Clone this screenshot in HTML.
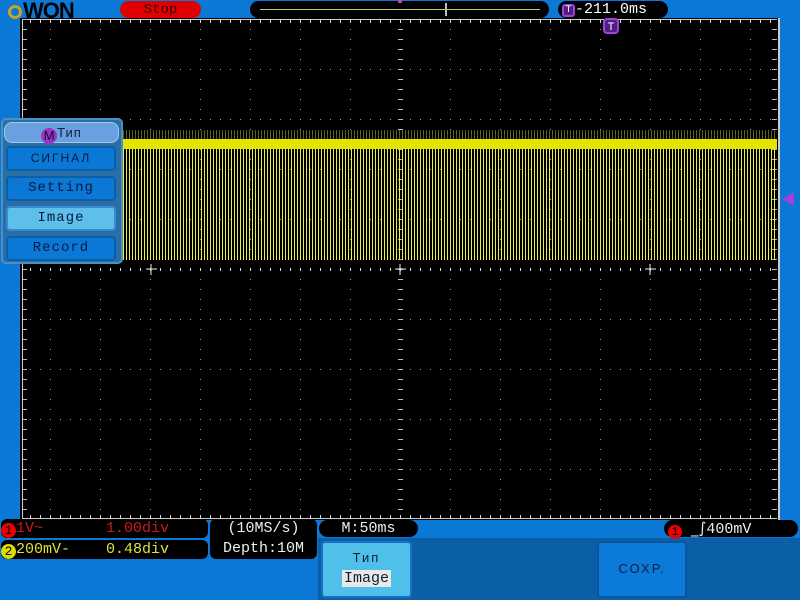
<!DOCTYPE html>
<html><head><meta charset="utf-8"><style>
*{margin:0;padding:0;box-sizing:border-box}
body{width:800px;height:600px;overflow:hidden;background:#0b78d6;position:relative;font-family:"Liberation Mono","DejaVu Sans Mono",monospace}
.a{position:absolute}
.pill{position:absolute;border-radius:9px;background:#000}
.btn{position:absolute;left:6px;width:110px;height:25px;background:#0b78d6;border:2px solid #0a5fa8;border-radius:4px;color:#061a40;font-size:14px;text-align:center;line-height:21px;letter-spacing:1px}
</style></head><body>
<div class="a" style="left:8px;top:-2px;font:bold 22px 'Liberation Sans',sans-serif;color:#000;letter-spacing:-1px"><span style="display:inline-block;width:14px;height:14px;border:3px solid #c9a227;border-radius:50%;vertical-align:-1px;margin-right:1px"></span>WON</div>
<div class="pill" style="left:120px;top:1px;width:81px;height:17px;background:#e00000;color:#3a0000;font-size:14px;text-align:center;line-height:19px">Stop</div>
<div class="pill" style="left:250px;top:1px;width:299px;height:17px"></div>
<div class="a" style="left:260px;top:9px;width:280px;height:1px;background:#c8c860"></div>
<div class="a" style="left:445px;top:3px;width:2px;height:13px;background:#bbb"></div>
<div class="a" style="left:398px;top:0;width:4px;height:3px;background:#c040c0"></div>
<div class="pill" style="left:558px;top:1px;width:110px;height:17px;color:#fff;font-size:15px;line-height:17px;padding-left:4px"><span style="display:inline-block;width:13px;height:13px;border:2px solid #a040e0;border-radius:3px;background:#502080;color:#fff;font-size:10px;line-height:9px;text-align:center;vertical-align:1px">T</span>-211.0ms</div>
<div class="a" style="left:20px;top:18px;width:760px;height:502px;background:#000;border-right:2px solid #ccc"></div>
<svg class="a" style="left:0;top:0" width="800" height="600">
<defs>
<pattern id="g" x="0" y="19" width="50" height="50" patternUnits="userSpaceOnUse">
<rect x="0" y="10" width="1" height="1" fill="#999"/><rect x="0" y="20" width="1" height="1" fill="#999"/><rect x="0" y="30" width="1" height="1" fill="#999"/><rect x="0" y="40" width="1" height="1" fill="#999"/>
<rect x="0" y="0" width="1" height="1" fill="#999"/><rect x="10" y="0" width="1" height="1" fill="#999"/><rect x="20" y="0" width="1" height="1" fill="#999"/><rect x="30" y="0" width="1" height="1" fill="#999"/><rect x="40" y="0" width="1" height="1" fill="#999"/>
</pattern>
<pattern id="th" x="0" y="0" width="10" height="10" patternUnits="userSpaceOnUse"><rect x="0" y="0" width="1" height="10" fill="#ddd"/></pattern>
<pattern id="tv" x="0" y="9" width="10" height="10" patternUnits="userSpaceOnUse"><rect x="0" y="0" width="10" height="1" fill="#bbb"/></pattern>
<pattern id="w" x="0" y="0" width="3" height="10" patternUnits="userSpaceOnUse"><rect x="0" y="0" width="1" height="10" fill="#f0f040"/></pattern>
</defs>
<rect x="22" y="19" width="755" height="500" fill="url(#g)"/>
<rect x="22" y="19" width="755" height="1" fill="#ccc"/>
<rect x="22" y="518" width="755" height="1" fill="#ccc"/>
<rect x="22" y="19" width="1" height="500" fill="#ccc"/>
<rect x="22" y="20" width="755" height="3" fill="url(#th)"/>
<rect x="22" y="515" width="755" height="3" fill="url(#th)"/>
<rect x="22" y="268" width="755" height="3" fill="url(#th)"/>
<rect x="398" y="19" width="5" height="500" fill="url(#tv)"/>
<rect x="23" y="19" width="4" height="500" fill="url(#tv)"/>
<rect x="772" y="19" width="5" height="500" fill="url(#tv)"/>
<path d="M146 269h11M151 264v11M645 269h11M650 264v11M395 269h11M400 264v11" stroke="#eee"/>
<rect x="123" y="148" width="654" height="112" fill="url(#w)"/>
<rect x="123" y="139" width="654" height="10" fill="#e4e400"/>
<rect x="123" y="130" width="654" height="9" fill="url(#w)" opacity=".4"/>
<path d="M782 199l12-7v14z" fill="#a040e0"/>
<rect x="604" y="19" width="14" height="14" rx="3" fill="#502080" stroke="#a040e0" stroke-width="2"/>
<text x="611" y="30" font-size="11" fill="#fff" text-anchor="middle" font-family="Liberation Sans">T</text>
</svg>
<div class="a" style="left:1px;top:118px;width:122px;height:146px;background:#2a6ea8;border:2px solid #4a90c0;border-radius:5px"></div>
<div class="a" style="left:4px;top:122px;width:115px;height:21px;background:#6aa0e0;border:1px solid #a0c8f0;border-radius:8px;text-align:center;font:13px 'Liberation Sans','DejaVu Sans',sans-serif;color:#102040;line-height:19px;letter-spacing:1px"><span style="display:inline-block;width:16px;height:16px;border-radius:50%;background:#9b30d0;color:#111;font-size:13px;line-height:16px;vertical-align:-3px;letter-spacing:0">M</span>Тип</div>
<div class="btn" style="top:146px;font-family:'Liberation Sans','DejaVu Sans',sans-serif;font-size:12px;letter-spacing:2px">СИГНАЛ</div>
<div class="btn" style="top:176px">Setting</div>
<div class="btn" style="top:206px;background:#5ec0ea;border-color:#3a8ad0">Image</div>
<div class="btn" style="top:236px">Record</div>
<div class="a" style="left:0;top:538px;width:318px;height:62px;background:#0b78d6"></div>
<div class="a" style="left:318px;top:538px;width:482px;height:62px;background:#0a5fa5"></div>
<div class="pill" style="left:1px;top:519px;width:207px;height:19px;border-radius:6px;color:#d01818;font-size:15px;line-height:19px"><span style="display:inline-block;width:15px;height:15px;border-radius:50%;background:#e00;color:#000;font-size:13px;line-height:15px;text-align:center;vertical-align:-2px">1</span>1V~&nbsp;&nbsp;&nbsp;&nbsp;&nbsp;&nbsp;&nbsp;1.00div</div>
<div class="pill" style="left:1px;top:540px;width:207px;height:19px;border-radius:6px;color:#e0e040;font-size:15px;line-height:19px"><span style="display:inline-block;width:15px;height:15px;border-radius:50%;background:#dd0;color:#000;font-size:13px;line-height:15px;text-align:center;vertical-align:-2px">2</span>200mV-&nbsp;&nbsp;&nbsp;&nbsp;0.48div</div>
<div class="pill" style="left:210px;top:519px;width:107px;height:40px;border-radius:6px;color:#eee;font-size:15px;line-height:20px;text-align:center">(10MS/s)<br>Depth:10M</div>
<div class="pill" style="left:319px;top:520px;width:99px;height:17px;color:#eee;font-size:15px;line-height:17px;text-align:center">M:50ms</div>
<div class="pill" style="left:664px;top:520px;width:134px;height:17px;color:#eee;font-size:15px;line-height:17px;padding-left:4px"><span style="display:inline-block;width:14px;height:14px;border-radius:50%;background:#e00;color:#000;font-size:12px;line-height:14px;text-align:center;vertical-align:-2px">1</span> <span style="font-family:'DejaVu Sans'">_∫</span>400mV</div>
<div class="a" style="left:321px;top:541px;width:91px;height:57px;background:#4ec0ea;border:2px solid #1a70c8;border-radius:4px;text-align:center;font-size:13px;color:#102030"><div style="margin-top:7px;font-family:'Liberation Sans','DejaVu Sans',sans-serif;letter-spacing:2px">Тип</div><div style="display:inline-block;margin-top:5px;background:#e8e8e8;padding:0 2px;font-size:15px">Image</div></div>
<div class="a" style="left:597px;top:541px;width:90px;height:57px;background:#0b7ad8;border:2px solid #0a55a0;border-radius:4px;text-align:center;font-family:'Liberation Sans','DejaVu Sans',sans-serif;font-size:13px;line-height:52px;color:#102040;letter-spacing:2px">СОХР.</div>
</body></html>
